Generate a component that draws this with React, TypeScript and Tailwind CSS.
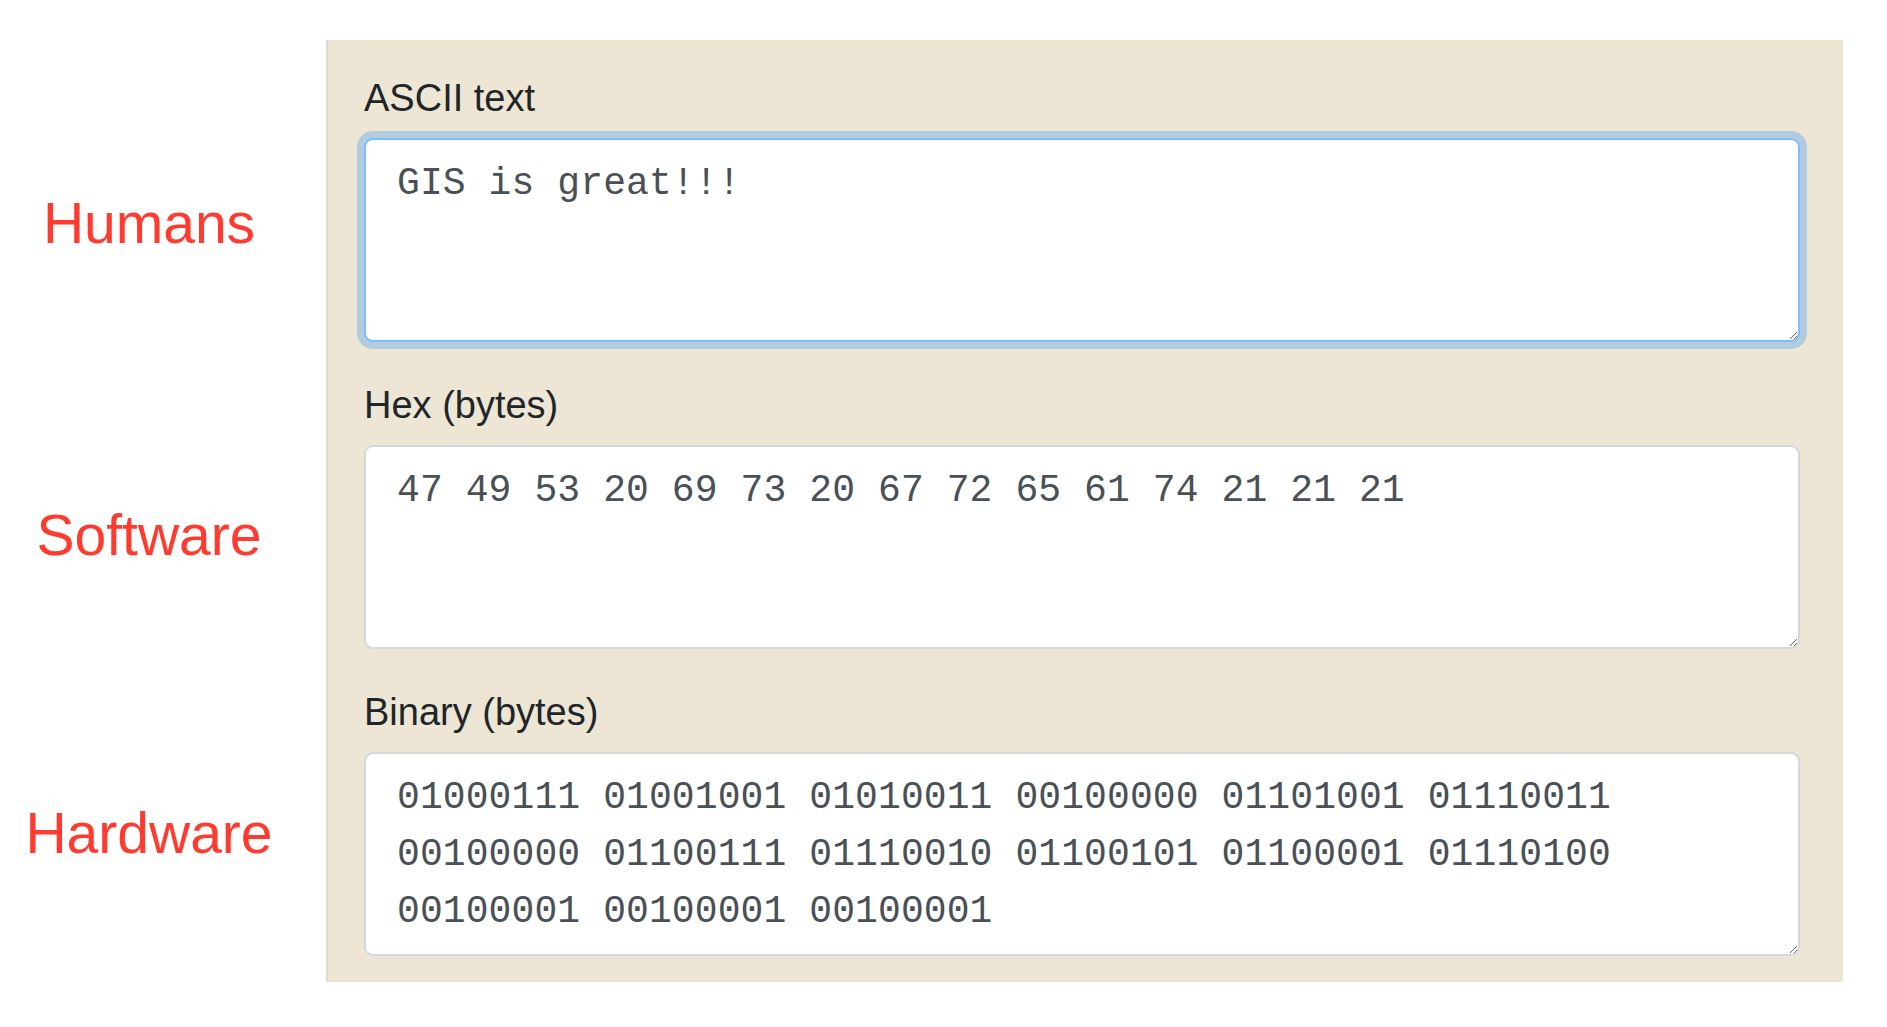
import React from 'react';

interface Row {
  layer: string;
  label: string;
  value: string;
  focused?: boolean;
  layerPad: string;
  cellPad: string;
}

const rows: Row[] = [
  {
    layer: 'Humans',
    label: 'ASCII text',
    value: 'GIS is great!!!',
    focused: true,
    layerPad: 'pt-[155px]',
    cellPad: 'pt-[30px] pb-[35px]',
  },
  {
    layer: 'Software',
    label: 'Hex (bytes)',
    value: '47 49 53 20 69 73 20 67 72 65 61 74 21 21 21',
    layerPad: 'pt-[130px]',
    cellPad: 'pb-[35px]',
  },
  {
    layer: 'Hardware',
    label: 'Binary (bytes)',
    value:
      '01000111 01001001 01010011 00100000 01101001 01110011 00100000 01100111 01110010 01100101 01100001 01110100 00100001 00100001 00100001',
    layerPad: 'pt-[121px]',
    cellPad: 'pb-[26px]',
  },
];

function Field({ row }: { row: Row }) {
  return (
    <div className={`bg-[#ede6d4] border-l-2 border-[#dedbd3] pl-[36px] pr-[43px] ${row.cellPad}`}>
      <label className="block text-[38px] leading-[57px] mb-[11px] text-[#212529] font-['Liberation_Sans',Arial,sans-serif]">
        {row.label}
      </label>
      <textarea
        readOnly
        spellCheck={false}
        rows={3}
        defaultValue={row.value}
        className={`block w-[1436px] h-[204px] box-border rounded-[9px] border-[2.4px] bg-white pl-[31px] pr-[27px] pt-[15px] pb-[10px] overflow-hidden text-[38px] leading-[57px] tracking-[0.1px] text-[#495057] outline-none font-['Liberation_Mono','DejaVu_Sans_Mono',monospace] ${
          row.focused
            ? 'border-[#80bdff] shadow-[0_0_0_7px_rgba(0,123,255,0.25)]'
            : 'border-[#d3d8dd]'
        }`}
      />
    </div>
  );
}

export default function App() {
  return (
    <div className="min-h-[1027px] bg-white pt-[40px]">
      <div className="grid grid-cols-[298px_1517px] gap-x-[28px]">
        {rows.map((row) => (
          <React.Fragment key={row.layer}>
            <div
              className={`text-center text-[57px] leading-[57px] text-[#ff3b30] font-['Liberation_Sans',Arial,sans-serif] ${row.layerPad}`}
            >
              {row.layer}
            </div>
            <Field row={row} />
          </React.Fragment>
        ))}
      </div>
    </div>
  );
}
